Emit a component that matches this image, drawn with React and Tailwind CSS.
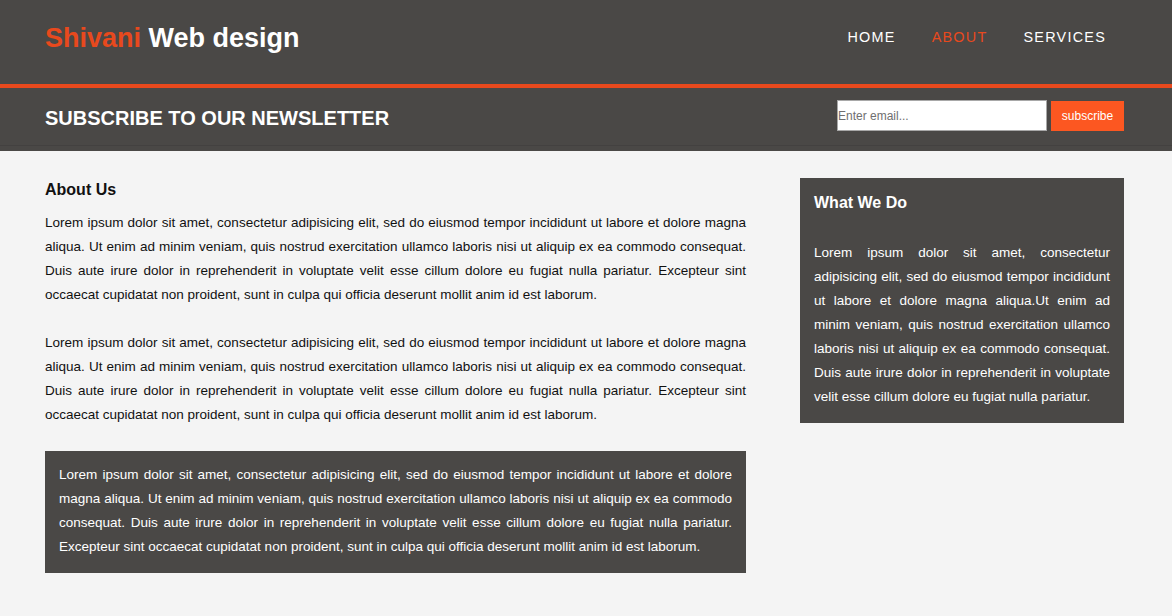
import React from "react";

const lorem =
  "Lorem ipsum dolor sit amet, consectetur adipisicing elit, sed do eiusmod tempor incididunt ut labore et dolore magna aliqua. Ut enim ad minim veniam, quis nostrud exercitation ullamco laboris nisi ut aliquip ex ea commodo consequat. Duis aute irure dolor in reprehenderit in voluptate velit esse cillum dolore eu fugiat nulla pariatur. Excepteur sint occaecat cupidatat non proident, sunt in culpa qui officia deserunt mollit anim id est laborum.";

function App() {
  return (
    <div
      className="min-h-screen w-full bg-[#f4f4f4] text-[#111]"
      style={{ fontFamily: '"Liberation Sans", Arial, sans-serif' }}
    >
      {/* Header */}
      <header className="bg-[#4a4846] border-b-4 border-[#e8491d]">
        <div className="h-[84px] pl-[45px] pr-[48px] flex items-center justify-between">
          <h1 className="text-[27px] font-bold leading-none pb-[7px]">
            <span className="text-[#e8491d]">Shivani</span>{" "}
            <span className="text-white">Web design</span>
          </h1>
          <nav>
            <ul className="flex text-[14.4px] tracking-[1.25px] uppercase leading-none pb-[10px]">
              <li className="px-[18px] text-white">Home</li>
              <li className="px-[18px] text-[#e8491d]">About</li>
              <li className="pl-[18px] pr-[18px] text-white">Services</li>
            </ul>
          </nav>
        </div>
      </header>

      {/* Newsletter */}
      <section className="bg-[#4a4846] h-[63px]">
        <div className="h-[58px] border-b border-[#434140] pl-[45px] pr-[48px] flex items-center justify-between">
          <h2 className="text-white text-[20px] font-bold leading-none pt-[3px] uppercase">
            Subscribe to our newsletter
          </h2>
          <form className="flex items-center gap-[4px] pb-[2px]" onSubmit={(e) => e.preventDefault()}>
            <input
              type="email"
              placeholder="Enter email..."
              className="w-[210px] h-[31px] bg-white border border-[#a8a8a8] px-0 text-[12px] text-[#333] placeholder:text-[#6f6f6f] outline-none"
            />
            <button className="w-[73px] h-[30px] bg-[#fc5721] text-white text-[12px]">
              subscribe
            </button>
          </form>
        </div>
      </section>

      {/* Main */}
      <div className="pl-[45px] pr-[48px] pt-[27px] flex justify-between">
        <article className="w-[701px] text-[13.5px] leading-[24px] text-justify">
          <h3 className="text-[16px] font-bold leading-none pt-[4px] mb-[13px] text-left">About Us</h3>
          <p className="mb-[24px]">{lorem}</p>
          <p className="mb-[24px]">{lorem}</p>
          <div className="bg-[#4a4846] text-white px-[14px] pt-[12px] pb-[14px]">
            <p>{lorem}</p>
          </div>
        </article>

        <aside className="w-[324px] h-fit bg-[#4a4846] text-white px-[14px] pt-[16px] pb-[14px]">
          <h3 className="text-[16px] font-bold leading-[18px] mb-[29px]">What We Do</h3>
          <p className="text-[13.5px] leading-[24px] text-justify">
            Lorem ipsum dolor sit amet, consectetur adipisicing elit, sed do eiusmod tempor incididunt ut
            labore et dolore magna aliqua.Ut enim ad minim veniam, quis nostrud exercitation ullamco
            laboris nisi ut aliquip ex ea commodo consequat. Duis aute irure dolor in reprehenderit in
            voluptate velit esse cillum dolore eu fugiat nulla pariatur.
          </p>
        </aside>
      </div>
    </div>
  );
}

export default App;
